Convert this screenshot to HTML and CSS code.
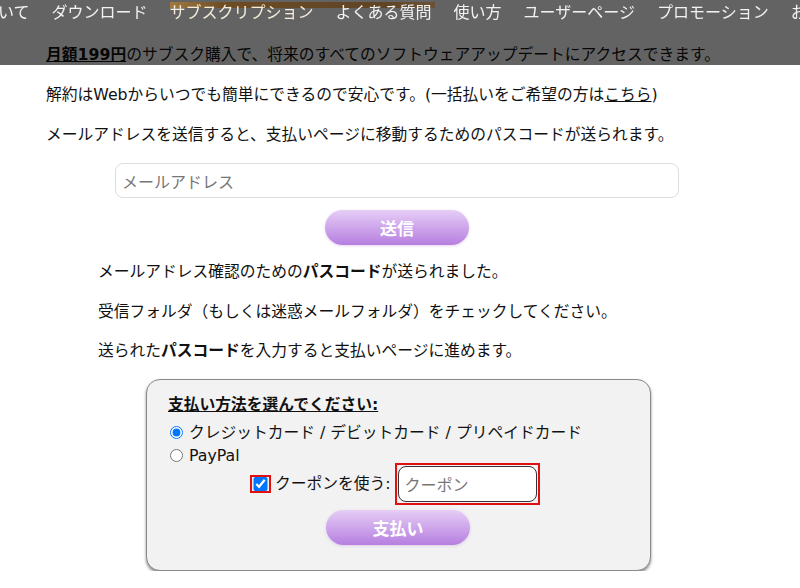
FILE: index.html
```html
<!DOCTYPE html>
<html lang="ja">
<head>
    <meta charset="UTF-8">
    <meta name="viewport" content="width=device-width, initial-scale=1.0">
    <title>サブスクリプション</title>
    <link rel="stylesheet" href="styles.css">
</head>
<body>
    <!-- 上部のナビ (半透明で本文に重なる) -->
    <header class="site-header">
        <div class="header-bar"></div>
        <nav class="nav">
            <a class="nav-item nav-first" href="#">について</a>
            <a class="nav-item" href="#">ダウンロード</a>
            <a class="nav-item nav-current" href="#">サブスクリプション</a>
            <a class="nav-item" href="#">よくある質問</a>
            <a class="nav-item" href="#">使い方</a>
            <a class="nav-item" href="#">ユーザーページ</a>
            <a class="nav-item" href="#">プロモーション</a>
            <a class="nav-item" href="#">お問い合わせ</a>
        </nav>
    </header>

    <main class="content">
        <p class="lead"><strong class="price">月額199円</strong>のサブスク購入で、将来のすべてのソフトウェアアップデートにアクセスできます。</p>
        <p class="lead">解約はWebからいつでも簡単にできるので安心です。(一括払いをご希望の方は<a class="text-link" href="#">こちら</a>)</p>
        <p class="lead">メールアドレスを送信すると、支払いページに移動するためのパスコードが送られます。</p>

        <form class="mail-form" onsubmit="return false">
            <input class="mail-input" type="email" placeholder="メールアドレス">
            <button class="btn" type="submit">送信</button>
        </form>

        <div class="sent-info">
            <p>メールアドレス確認のための<strong>パスコード</strong>が送られました。</p>
            <p>受信フォルダ（もしくは迷惑メールフォルダ）をチェックしてください。</p>
            <p>送られた<strong>パスコード</strong>を入力すると支払いページに進めます。</p>
        </div>

        <form class="pay-box" onsubmit="return false">
            <p class="pay-title">支払い方法を選んでください:</p>
            <label class="pay-option"><input type="radio" name="method" checked> クレジットカード / デビットカード / プリペイドカード</label>
            <label class="pay-option"><input type="radio" name="method"> PayPal</label>
            <div class="coupon-row">
                <span class="mark"><input type="checkbox" checked></span>
                <span class="coupon-label">クーポンを使う:</span>
                <span class="mark mark-input"><input class="coupon-input" type="text" placeholder="クーポン"></span>
            </div>
            <button class="btn" type="submit">支払い</button>
        </form>
    </main>
</body>
</html>
```

FILE: styles.css
```css
body {
    margin: 0;
    padding: 0;
    background-color: #fff;
    color: #111;
    font-family: 'DejaVu Sans', 'Noto Sans CJK JP', sans-serif;
    font-size: 15.75px;
    line-height: 22px;
    overflow: hidden;
}

/* ヘッダー */
.site-header {
    position: fixed;
    top: 0;
    left: 0;
    width: 100%;
    height: 65px;
    background-color: rgba(0, 0, 0, 0.61);
    z-index: 10;
}

.header-bar {
    position: absolute;
    top: 2px;
    left: 170px;
    width: 265px;
    height: 6px;
    background: linear-gradient(to right, #a07a40, #6e4c24 20%, #5f4426 80%, #6a5238);
}

.nav {
    position: relative;
    display: flex;
    gap: 22px;
    white-space: nowrap;
    font-family: 'Noto Sans CJK JP', sans-serif;
    font-size: 16px;
    line-height: 22px;
}

.nav-item {
    color: #f2f2f2;
    text-decoration: none;
    flex-shrink: 0;
}

.nav-first {
    margin-left: -34px;
}

.nav-current {
    color: #f6eedb;
}

/* 本文 */
.content {
    padding: 44px 0 0 46px;
}

p {
    margin: 0 0 18px;
}

.price {
    text-decoration: underline;
}

.text-link {
    color: #111;
}

.mail-form {
    display: flex;
    flex-direction: column;
    align-items: center;
    width: 564px;
    margin: -1px 0 0 69px;
}

.mail-input {
    width: 100%;
    height: 35px;
    box-sizing: border-box;
    padding: 0 6px;
    border: 1px solid #ddd;
    border-radius: 8px;
    font-family: 'Noto Sans CJK JP', sans-serif;
    font-size: 16px;
    color: #333;
}

.mail-input::placeholder,
.coupon-input::placeholder {
    color: #777;
}

.btn {
    width: 144px;
    height: 35px;
    margin-top: 12px;
    border: none;
    border-radius: 18px;
    background: linear-gradient(to bottom, #e6cdf6, #b67fe0);
    box-shadow: 0 1px 3px rgba(150, 90, 200, 0.25);
    color: #fff;
    font-family: 'Noto Sans CJK JP', sans-serif;
    font-size: 17px;
    font-weight: bold;
    cursor: pointer;
}

.sent-info {
    margin: 16px 0 0 52px;
}

.sent-info p {
    margin-bottom: 18px;
}

.sent-info p:nth-child(2) {
    margin-bottom: 17px;
}

/* 支払いボックス */
.pay-box {
    display: flex;
    flex-direction: column;
    width: 505px;
    height: 192px;
    box-sizing: border-box;
    margin: -1px 0 0 100px;
    padding: 14px 0 0 21px;
    background-color: #f2f2f2;
    border: 1px solid #8a8a8a;
    border-radius: 14px;
    box-shadow: 0 2px 3px rgba(0, 0, 0, 0.45);
}

.pay-title {
    margin: 0 0 5px;
    font-weight: bold;
    text-decoration: underline;
}

.pay-option {
    display: flex;
    align-items: center;
    gap: 6px;
    line-height: 23px;
}

.pay-option input {
    width: 13px;
    height: 13px;
    margin: 0 0 0 2px;
}

.coupon-row {
    display: flex;
    align-items: center;
    margin: -4px 0 0 82px;
}

.mark {
    display: inline-flex;
    border: 2px solid #e01010;
}

.mark input[type="checkbox"] {
    width: 15px;
    height: 14px;
    margin: 0 1px;
}

.coupon-label {
    margin: 0 4px 0 4px;
}

.mark-input {
    padding: 1px;
}

.coupon-input {
    width: 139px;
    height: 36px;
    box-sizing: border-box;
    padding: 0 6px;
    border: 1.5px solid #333;
    border-radius: 8px;
    font-family: 'Noto Sans CJK JP', sans-serif;
    font-size: 16px;
}

.pay-box .btn {
    align-self: center;
    margin: 5px 0 0 -22px;
}
```
